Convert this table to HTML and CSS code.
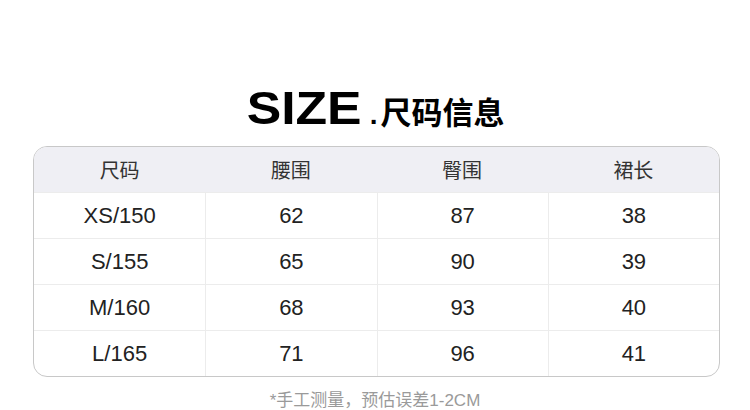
FILE: index.html
```html
<!DOCTYPE html>
<html lang="zh">
<head>
<meta charset="utf-8">
<link rel="stylesheet" href="styles.css">
</head>
<body>
<div class="page">
  <h1 class="title"><span class="title-en">SIZE</span><span class="title-dot">.</span><span class="title-cn">尺码信息</span></h1>
  <div class="table">
    <div class="row head">
      <div class="cell">尺码</div><div class="cell">腰围</div><div class="cell">臀围</div><div class="cell">裙长</div>
    </div>
    <div class="row">
      <div class="cell">XS/150</div><div class="cell">62</div><div class="cell">87</div><div class="cell">38</div>
    </div>
    <div class="row">
      <div class="cell">S/155</div><div class="cell">65</div><div class="cell">90</div><div class="cell">39</div>
    </div>
    <div class="row">
      <div class="cell">M/160</div><div class="cell">68</div><div class="cell">93</div><div class="cell">40</div>
    </div>
    <div class="row">
      <div class="cell">L/165</div><div class="cell">71</div><div class="cell">96</div><div class="cell">41</div>
    </div>
  </div>
  <p class="note">*手工测量，预估误差1-2CM</p>
</div>
</body>
</html>
```
FILE: styles.css
```css
html, body {
  margin: 0;
  padding: 0;
  background: #ffffff;
}
.page {
  width: 750px;
  height: 410px;
  padding-top: 80px;
  box-sizing: border-box;
  font-family: "Liberation Sans", Arial, "Noto Sans CJK SC", sans-serif;
  color: #222;
  overflow: hidden;
}
.title {
  margin: 0;
  display: flex;
  justify-content: center;
  align-items: baseline;
  height: 56px;
  line-height: 56px;
  font-weight: bold;
  color: #000;
}
.title-en {
  font-size: 46px;
  display: inline-block;
  transform: scaleX(1.124);
  margin: 0 14px 0 8px;
}
.title-dot {
  font-size: 28px;
  margin-right: 3px;
}
.title-cn {
  font-size: 31px;
  font-family: "Noto Sans CJK SC", sans-serif;
}
.table {
  margin: 10px 30px 0 33px;
  border: 1px solid #c8c8c8;
  border-radius: 14px;
  overflow: hidden;
}
.row {
  display: grid;
  grid-template-columns: repeat(4, 1fr);
  height: 45px;
  border-top: 1px solid #ececec;
}
.row.head {
  border-top: none;
  height: 45px;
  background: #efeff4;
}
.cell {
  display: flex;
  align-items: center;
  justify-content: center;
  font-size: 22px;
  color: #222;
  border-left: 1px solid #ececec;
}
.cell:first-child {
  border-left: none;
}
.head .cell {
  font-size: 20px;
  color: #333;
  border-left: none;
  font-family: "Noto Sans CJK SC", sans-serif;
}
.note {
  margin: 12px 0 0;
  text-align: center;
  font-size: 17px;
  line-height: 24px;
  color: #9a9a9a;
}
```
